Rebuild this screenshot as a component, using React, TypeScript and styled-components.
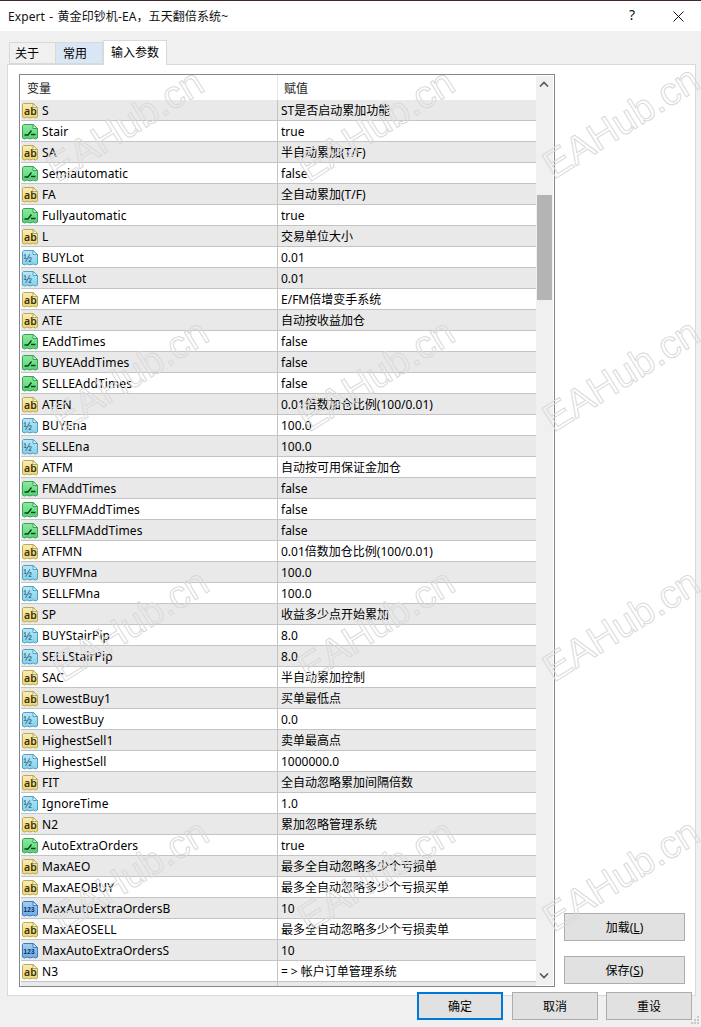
import React from "react";
import styled, { createGlobalStyle } from "styled-components";

type Kind = "ab" | "bool" | "real" | "int";

const rows: [string, Kind, string][] = [
  ["S", "ab", "ST是否启动累加功能"],
  ["Stair", "bool", "true"],
  ["SA", "ab", "半自动累加(T/F)"],
  ["Semiautomatic", "bool", "false"],
  ["FA", "ab", "全自动累加(T/F)"],
  ["Fullyautomatic", "bool", "true"],
  ["L", "ab", "交易单位大小"],
  ["BUYLot", "real", "0.01"],
  ["SELLLot", "real", "0.01"],
  ["ATEFM", "ab", "E/FM倍增变手系统"],
  ["ATE", "ab", "自动按收益加仓"],
  ["EAddTimes", "bool", "false"],
  ["BUYEAddTimes", "bool", "false"],
  ["SELLEAddTimes", "bool", "false"],
  ["ATEN", "ab", "0.01倍数加仓比例(100/0.01)"],
  ["BUYEna", "real", "100.0"],
  ["SELLEna", "real", "100.0"],
  ["ATFM", "ab", "自动按可用保证金加仓"],
  ["FMAddTimes", "bool", "false"],
  ["BUYFMAddTimes", "bool", "false"],
  ["SELLFMAddTimes", "bool", "false"],
  ["ATFMN", "ab", "0.01倍数加仓比例(100/0.01)"],
  ["BUYFMna", "real", "100.0"],
  ["SELLFMna", "real", "100.0"],
  ["SP", "ab", "收益多少点开始累加"],
  ["BUYStairPip", "real", "8.0"],
  ["SELLStairPip", "real", "8.0"],
  ["SAC", "ab", "半自动累加控制"],
  ["LowestBuy1", "ab", "买单最低点"],
  ["LowestBuy", "real", "0.0"],
  ["HighestSell1", "ab", "卖单最高点"],
  ["HighestSell", "real", "1000000.0"],
  ["FIT", "ab", "全自动忽略累加间隔倍数"],
  ["IgnoreTime", "real", "1.0"],
  ["N2", "ab", "累加忽略管理系统"],
  ["AutoExtraOrders", "bool", "true"],
  ["MaxAEO", "ab", "最多全自动忽略多少个亏损单"],
  ["MaxAEOBUY", "ab", "最多全自动忽略多少个亏损买单"],
  ["MaxAutoExtraOrdersB", "int", "10"],
  ["MaxAEOSELL", "ab", "最多全自动忽略多少个亏损卖单"],
  ["MaxAutoExtraOrdersS", "int", "10"],
  ["N3", "ab", "=>帐户订单管理系统"],
];

const marks = [
  [125, 125], [376, 125], [621, 122],
  [130, 375], [376, 375], [621, 375],
  [130, 625], [376, 625], [621, 625],
  [130, 875], [376, 875], [621, 875],
];

const Global = createGlobalStyle`
  html, body { margin: 0; padding: 0; background: #f0f0f0; }
  body { font-family: "Noto Sans", "Noto Sans CJK SC", sans-serif; font-size: 12px; color: #000; }
`;

const Win = styled.div`
  position: relative;
  width: 701px;
  height: 1027px;
  overflow: hidden;
  background: #f0f0f0;
  display: flex;
  flex-direction: column;
`;

const TitleBar = styled.div`
  height: 30px;
  border-top: 1px solid #3f2a2a;
  background: #fff;
  display: flex;
  align-items: center;
  padding-left: 8px;
  color: #111;
`;

const TitleText = styled.span`
  flex: 1;
  letter-spacing: 0.1px;
  word-spacing: 1px;
`;

const HelpButton = styled.span`
  width: 46px;
  text-align: center;
  font-size: 14px;
  padding-bottom: 4px;
`;

const CloseButton = styled.span`
  width: 46px;
  display: flex;
  justify-content: center;
`;

const Tabs = styled.div`
  display: flex;
  align-items: flex-end;
  height: 33px;
  padding-left: 9px;
`;

const Tab = styled.div<{ $active?: boolean; $hover?: boolean }>`
  box-sizing: border-box;
  width: ${(p) => (p.$active ? "64px" : "47px")};
  height: ${(p) => (p.$active ? "25px" : "22px")};
  margin-bottom: ${(p) => (p.$active ? "-1px" : "0")};
  background: ${(p) => (p.$active ? "#fff" : p.$hover ? "#d8e6f5" : "#f0f0f0")};
  border: 1px solid #d9d9d9;
  border-bottom: ${(p) => (p.$active ? "none" : "1px solid #d9d9d9")};
  border-left: ${(p) => (p.$hover ? "none" : "1px solid #d9d9d9")};
  position: relative;
  z-index: ${(p) => (p.$active ? 1 : 0)};
  display: flex;
  align-items: center;
  padding-left: ${(p) => (p.$active ? "7px" : p.$hover ? "7px" : "5px")};
  padding-bottom: ${(p) => (p.$active ? "2px" : "0")};
`;

const Panel = styled.div`
  box-sizing: border-box;
  margin-left: 7px;
  width: 689px;
  height: 932px;
  background: #fff;
  border: 1px solid #d9d9d9;
  padding: 9px 11px;
  display: flex;
  align-items: flex-start;
`;

const List = styled.div`
  box-sizing: border-box;
  width: 536px;
  height: 913px;
  border: 1px solid #82878f;
  display: flex;
  background: #fff;
`;

const ListBody = styled.div`
  flex: 1;
  min-width: 0;
  overflow: hidden;
  padding-left: 1px;
`;

const HeaderRow = styled.div`
  display: grid;
  grid-template-columns: 256px 1fr;
  height: 25px;
  background: #fff;
`;

const HeaderCell = styled.div`
  display: flex;
  align-items: center;
  padding-left: 6px;
  color: #222;
  & + & {
    border-left: 1px solid #e5e5e5;
  }
`;

const Row = styled.div<{ $odd: boolean }>`
  box-sizing: border-box;
  display: grid;
  grid-template-columns: 256px 1fr;
  height: 21px;
  background: ${(p) => (p.$odd ? "#e9e9e9" : "#fff")};
  border-bottom: 1px solid #c4c4c4;
`;

const NameCell = styled.div`
  display: flex;
  align-items: center;
  gap: 4px;
  padding-left: 1px;
  white-space: nowrap;
  letter-spacing: 0.12px;
`;

const ValueCell = styled.div`
  display: flex;
  align-items: center;
  padding-left: 3px;
  border-left: 1px solid #c4c4c4;
  white-space: nowrap;
`;

const Arrow = styled.span`
  letter-spacing: 3px;
`;

const Scrollbar = styled.div`
  position: relative;
  width: 17px;
  flex: none;
  background: #f0f0f0;
  margin-top: 1px;
  margin-bottom: 1px;
  border-right: 1px solid #fff;
`;

const ScrollArrow = styled.svg<{ $bottom?: boolean }>`
  position: absolute;
  left: 3px;
  ${(p) => (p.$bottom ? "bottom: 6px;" : "top: 5px;")}
`;

const ScrollThumb = styled.div`
  position: absolute;
  left: 1px;
  width: 15px;
  top: 119px;
  height: 105px;
  background: #b4b4b4;
`;

const SideButtons = styled.div`
  flex: 1;
  display: flex;
  flex-direction: column;
  align-items: flex-end;
  gap: 15px;
  padding-top: 839px;
  margin-right: -1px;
`;

const Button = styled.button<{ $primary?: boolean }>`
  box-sizing: border-box;
  font: inherit;
  color: #000;
  background: #e1e1e1;
  border: ${(p) => (p.$primary ? "2px solid #0078d7" : "1px solid #adadad")};
  padding: 0;
  cursor: default;
`;

const SideButton = styled(Button)`
  width: 121px;
  height: 28px;
`;

const Footer = styled.div`
  position: absolute;
  left: 417px;
  top: 992px;
  display: flex;
  gap: 9px;
`;

const FooterButton = styled(Button)`
  width: 86px;
  height: 28px;
  &:last-child {
    margin-left: -1px;
  }
`;

const Underlined = styled.span`
  text-decoration: underline;
`;

const Watermark = styled.div`
  position: absolute;
  transform: translate(-50%, -50%) rotate(-32deg);
  font-family: "Liberation Sans", sans-serif;
  font-size: 39px;
  line-height: 0.6;
  white-space: nowrap;
  color: transparent;
  -webkit-text-stroke: 1px #dadada;
  pointer-events: none;
`;

const Grip = styled.svg`
  position: absolute;
  right: 1px;
  bottom: 1px;
`;

const palette: Record<Kind, { top: string; bottom: string; edge: string; ink: string; fold: string }> = {
  ab: { top: "#f8eeb4", bottom: "#ead67c", edge: "#bfa955", ink: "#3d3206", fold: "#fffbe0" },
  bool: { top: "#8fe89e", bottom: "#55d274", edge: "#35a556", ink: "#07401a", fold: "#d8fbe0" },
  real: { top: "#b9e6f5", bottom: "#86d2ea", edge: "#4da3c6", ink: "#0f3c60", fold: "#eaf9ff" },
  int: { top: "#a4cff2", bottom: "#6fabe4", edge: "#3a7cbb", ink: "#062a58", fold: "#e4f2ff" },
};

// 文档形状的小图标，下边缘是锯齿
const TypeIcon = ({ kind }: { kind: Kind }) => {
  const c = palette[kind];
  const id = `icon-${kind}`;
  return (
    <svg width="16" height="17" viewBox="0 0 16 17" style={{ flex: "none" }}>
      <defs>
        <linearGradient id={id} x1="0" y1="0" x2="0" y2="1">
          <stop offset="0" stopColor={c.top} />
          <stop offset="1" stopColor={c.bottom} />
        </linearGradient>
      </defs>
      <path
        d="M.5 2.5 L1.5 1.5 H11 L15.5 5.5 V15 L13.5 16 L11 15 L8 16 L5 15 L2.5 16 L.5 15 Z"
        fill={`url(#${id})`}
        stroke={c.edge}
      />
      <path d="M11 1.5 L15.5 5.5 H11 Z" fill={c.fold} stroke={c.edge} />
      {kind === "ab" && (
        <text x="2" y="12.5" fontSize="10.5" fontFamily="Noto Sans, sans-serif" fontWeight="600" fill={c.ink}>
          ab
        </text>
      )}
      {kind === "bool" && (
        <path d="M2.5 12 H6 L9.5 7.5 M9 11.5 H13.5" fill="none" stroke={c.ink} strokeWidth="1.3" />
      )}
      {kind === "real" && (
        <text x="1.5" y="12.5" fontSize="10" fontFamily="Liberation Sans, sans-serif" fill={c.ink}>
          ½
        </text>
      )}
      {kind === "int" && (
        <text x="1.6" y="12" fontSize="6.4" fontFamily="Liberation Sans, sans-serif" fontWeight="700" fill={c.ink}>
          123
        </text>
      )}
    </svg>
  );
};

export default function App() {
  return (
    <Win>
      <Global />
      <TitleBar>
        <TitleText>Expert - 黄金印钞机-EA，五天翻倍系统~</TitleText>
        <HelpButton>?</HelpButton>
        <CloseButton>
          <svg width="11" height="11" viewBox="0 0 11 11">
            <path d="M.5 .5 L10.5 10.5 M10.5 .5 L.5 10.5" stroke="#111" fill="none" />
          </svg>
        </CloseButton>
      </TitleBar>
      <Tabs>
        <Tab>关于</Tab>
        <Tab $hover>常用</Tab>
        <Tab $active>输入参数</Tab>
      </Tabs>
      <Panel>
        <List>
          <ListBody>
            <HeaderRow>
              <HeaderCell>变量</HeaderCell>
              <HeaderCell>赋值</HeaderCell>
            </HeaderRow>
            {rows.map(([name, kind, value], i) => (
              <Row key={name} $odd={i % 2 === 0}>
                <NameCell>
                  <TypeIcon kind={kind} />
                  {name}
                </NameCell>
                <ValueCell>
                  {value.startsWith("=>") ? (
                    <>
                      <Arrow>=&gt;</Arrow>
                      {value.slice(2)}
                    </>
                  ) : (
                    value
                  )}
                </ValueCell>
              </Row>
            ))}
            {/* 下一行只露出一点 */}
            <Row $odd>
              <NameCell />
              <ValueCell />
            </Row>
          </ListBody>
          <Scrollbar>
            <ScrollArrow width="10" height="7" viewBox="0 0 10 7">
              <path d="M1 5.5 L5 1.5 L9 5.5" fill="none" stroke="#555" strokeWidth="1.6" />
            </ScrollArrow>
            <ScrollThumb />
            <ScrollArrow $bottom width="10" height="7" viewBox="0 0 10 7">
              <path d="M1 1.5 L5 5.5 L9 1.5" fill="none" stroke="#555" strokeWidth="1.6" />
            </ScrollArrow>
          </Scrollbar>
        </List>
        <SideButtons>
          <SideButton>加载(<Underlined>L</Underlined>)</SideButton>
          <SideButton>保存(<Underlined>S</Underlined>)</SideButton>
        </SideButtons>
      </Panel>
      <Footer>
        <FooterButton $primary>确定</FooterButton>
        <FooterButton>取消</FooterButton>
        <FooterButton>重设</FooterButton>
      </Footer>
      {marks.map(([x, y]) => (
        <Watermark key={`${x}-${y}`} style={{ left: x, top: y }}>
          EAHub.cn
        </Watermark>
      ))}
      <Grip width="12" height="12" viewBox="0 0 12 12">
        <path d="M9 2h2v2H9z M6 5h2v2H6z M9 5h2v2H9z M3 8h2v2H3z M6 8h2v2H6z M9 8h2v2H9z" fill="#c8c8c8" />
      </Grip>
    </Win>
  );
}
